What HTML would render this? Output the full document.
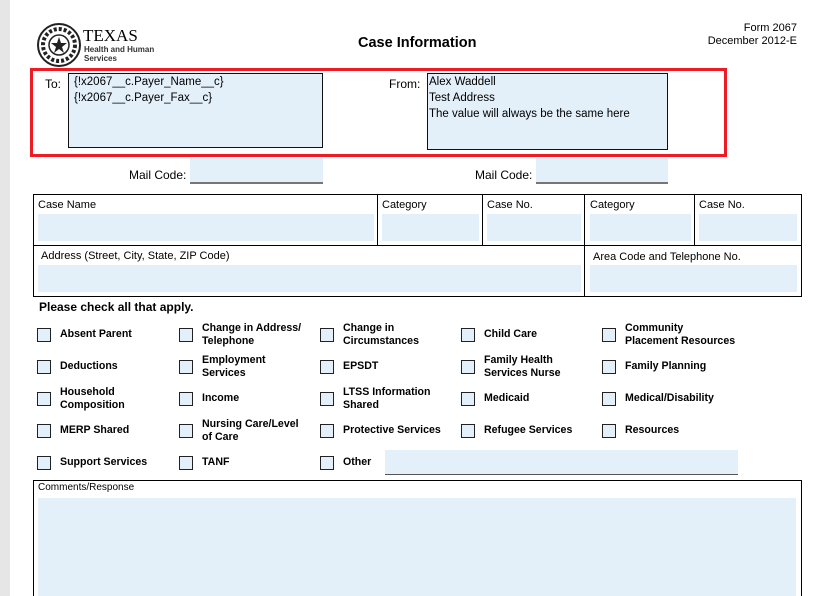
<html style="overflow:hidden;height:596px"><head><style>
body{margin:0;width:825px;height:596px;overflow:hidden;background:#fff;font-family:"Liberation Sans",Arial,sans-serif;position:relative}
.a{position:absolute}
.f{position:absolute;background:#e3eff9}
.l{position:absolute;font-size:11px;color:#000}
.cb{position:absolute;width:12px;height:12px;border:1px solid #222;background:#e3eff9}
.t{position:absolute;font-size:10.6px;font-weight:bold;line-height:13px}
</style></head><body>
<div class="a" style="left:0;top:0;width:10px;height:596px;background:#e6e6e6"></div>
<svg class="a" style="left:36px;top:22px" width="46" height="46" viewBox="0 0 46 46"><circle cx="23" cy="23" r="21" fill="none" stroke="#222" stroke-width="2"/><circle cx="23" cy="23" r="16" fill="none" stroke="#222" stroke-width="4" stroke-dasharray="3 2"/><circle cx="23" cy="23" r="10" fill="#fff" stroke="#222" stroke-width="1.5"/><polygon points="23,15 25,21 31,21 26,25 28,31 23,27 18,31 20,25 15,21 21,21" fill="#222"/></svg>
<div class="a" style="left:83px;top:27px;font-family:'Liberation Serif',serif;font-size:17px;line-height:17px">TEXAS</div>
<div class="a" style="left:84px;top:45px;font-size:8px;font-weight:bold;line-height:9px;color:#333">Health and Human<br>Services</div>
<div class="a" style="left:358px;top:35px;font-size:14.5px;font-weight:bold">Case Information</div>
<div class="a" style="left:700px;top:22px;font-size:11px;text-align:right;width:97px;line-height:13px">Form 2067<br>December 2012-E</div>
<div class="a" style="left:30px;top:68px;width:691px;height:83px;border:3px solid #ed1c24"></div>
<div class="l" style="left:45px;top:77px;font-size:12px">To:</div>
<div class="a" style="left:68px;top:73px;width:255px;height:75px;border:1px solid #111;background:#e3eff9;font-size:11.5px;line-height:16px;padding:0 5px;box-sizing:border-box">{!x2067__c.Payer_Name__c}<br>{!x2067__c.Payer_Fax__c}</div>
<div class="l" style="left:389px;top:77px;font-size:12px">From:</div>
<div class="a" style="left:427px;top:73px;width:241px;height:77px;border:1px solid #111;background:#e3eff9;font-size:11.5px;line-height:16px;padding:0 1px;box-sizing:border-box">Alex Waddell<br>Test Address<br>The value will always be the same here</div>
<div class="l" style="left:129px;top:168px;font-size:12px">Mail Code:</div>
<div class="f" style="left:190px;top:158px;width:133px;height:24px;border-bottom:2px solid #777"></div>
<div class="l" style="left:475px;top:168px;font-size:12px">Mail Code:</div>
<div class="f" style="left:536px;top:158px;width:132px;height:24px;border-bottom:2px solid #777"></div>
<div class="a" style="left:33px;top:194px;width:767px;height:101px;border:1px solid #000"></div>
<div class="a" style="left:33px;top:245px;width:769px;height:1px;background:#000"></div>
<div class="a" style="left:377px;top:194px;width:1px;height:51px;background:#000"></div>
<div class="a" style="left:482px;top:194px;width:1px;height:51px;background:#000"></div>
<div class="a" style="left:584px;top:194px;width:1px;height:102px;background:#000"></div>
<div class="a" style="left:694px;top:194px;width:1px;height:51px;background:#000"></div>
<div class="l" style="left:38px;top:199px">Case Name</div><div class="f" style="left:38px;top:214px;width:336px;height:27px"></div>
<div class="l" style="left:382px;top:199px">Category</div><div class="f" style="left:382px;top:214px;width:97px;height:27px"></div>
<div class="l" style="left:487px;top:199px">Case No.</div><div class="f" style="left:487px;top:214px;width:94px;height:27px"></div>
<div class="l" style="left:590px;top:199px">Category</div><div class="f" style="left:590px;top:214px;width:101px;height:27px"></div>
<div class="l" style="left:699px;top:199px">Case No.</div><div class="f" style="left:699px;top:214px;width:98px;height:27px"></div>
<div class="l" style="left:41px;top:250px">Address (Street, City, State, ZIP Code)</div><div class="f" style="left:38px;top:265px;width:543px;height:27px"></div>
<div class="l" style="left:593px;top:251px">Area Code and Telephone No.</div><div class="f" style="left:590px;top:265px;width:207px;height:27px"></div>
<div class="a" style="left:39px;top:300px;font-size:12px;font-weight:bold">Please check all that apply.</div>
<div class="cb" style="left:37px;top:328px"></div><div class="t" style="left:60px;top:328px">Absent Parent</div>
<div class="cb" style="left:179px;top:328px"></div><div class="t" style="left:202px;top:322px">Change in Address/<br>Telephone</div>
<div class="cb" style="left:320px;top:328px"></div><div class="t" style="left:343px;top:322px">Change in<br>Circumstances</div>
<div class="cb" style="left:461px;top:328px"></div><div class="t" style="left:484px;top:328px">Child Care</div>
<div class="cb" style="left:602px;top:328px"></div><div class="t" style="left:625px;top:322px">Community<br>Placement Resources</div>
<div class="cb" style="left:37px;top:360px"></div><div class="t" style="left:60px;top:360px">Deductions</div>
<div class="cb" style="left:179px;top:360px"></div><div class="t" style="left:202px;top:354px">Employment<br>Services</div>
<div class="cb" style="left:320px;top:360px"></div><div class="t" style="left:343px;top:360px">EPSDT</div>
<div class="cb" style="left:461px;top:360px"></div><div class="t" style="left:484px;top:354px">Family Health<br>Services Nurse</div>
<div class="cb" style="left:602px;top:360px"></div><div class="t" style="left:625px;top:360px">Family Planning</div>
<div class="cb" style="left:37px;top:392px"></div><div class="t" style="left:60px;top:386px">Household<br>Composition</div>
<div class="cb" style="left:179px;top:392px"></div><div class="t" style="left:202px;top:392px">Income</div>
<div class="cb" style="left:320px;top:392px"></div><div class="t" style="left:343px;top:386px">LTSS Information<br>Shared</div>
<div class="cb" style="left:461px;top:392px"></div><div class="t" style="left:484px;top:392px">Medicaid</div>
<div class="cb" style="left:602px;top:392px"></div><div class="t" style="left:625px;top:392px">Medical/Disability</div>
<div class="cb" style="left:37px;top:424px"></div><div class="t" style="left:60px;top:424px">MERP Shared</div>
<div class="cb" style="left:179px;top:424px"></div><div class="t" style="left:202px;top:418px">Nursing Care/Level<br>of Care</div>
<div class="cb" style="left:320px;top:424px"></div><div class="t" style="left:343px;top:424px">Protective Services</div>
<div class="cb" style="left:461px;top:424px"></div><div class="t" style="left:484px;top:424px">Refugee Services</div>
<div class="cb" style="left:602px;top:424px"></div><div class="t" style="left:625px;top:424px">Resources</div>
<div class="cb" style="left:37px;top:456px"></div><div class="t" style="left:60px;top:456px">Support Services</div>
<div class="cb" style="left:179px;top:456px"></div><div class="t" style="left:202px;top:456px">TANF</div>
<div class="cb" style="left:320px;top:456px"></div><div class="t" style="left:343px;top:456px">Other</div>
<div class="f" style="left:385px;top:450px;width:353px;height:24px;border-bottom:1px solid #555"></div>
<div class="a" style="left:33px;top:480px;width:767px;height:130px;border:1px solid #000;border-bottom:none"></div>
<div class="l" style="left:38px;top:482px;font-size:10px">Comments/Response</div>
<div class="f" style="left:38px;top:498px;width:758px;height:98px"></div>
</body></html>
